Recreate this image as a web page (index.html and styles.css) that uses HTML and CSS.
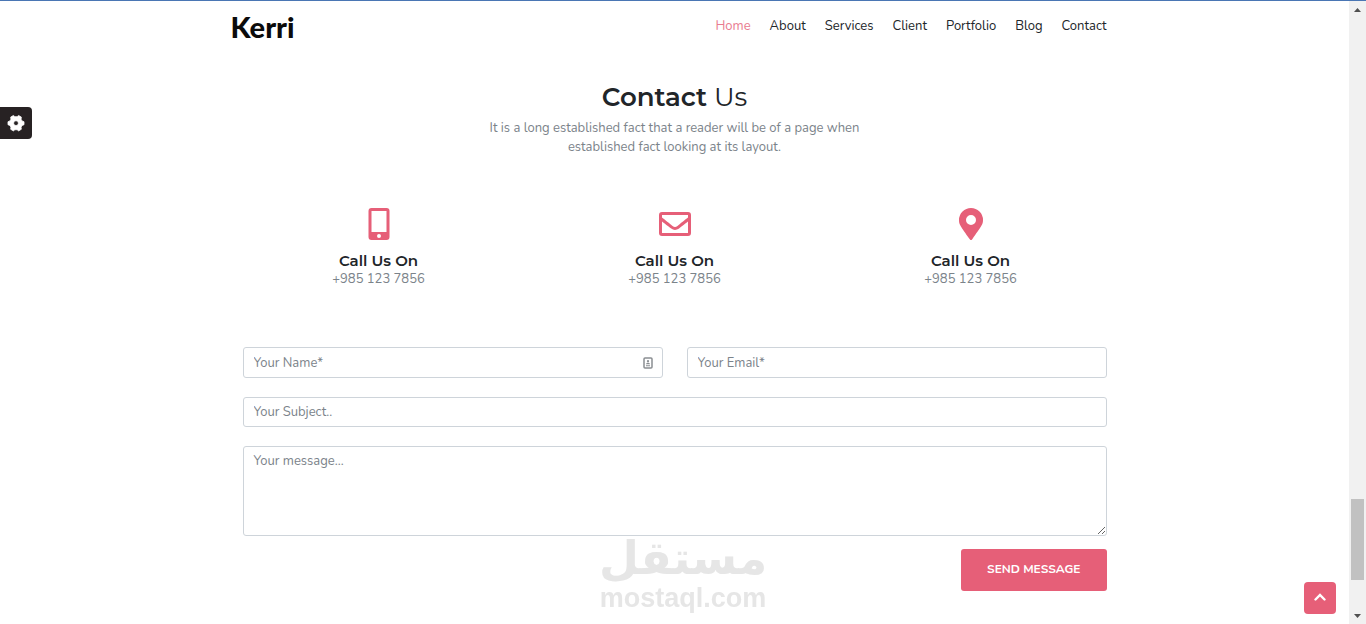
FILE: index.html
```html
<!DOCTYPE html>
<html lang="en">
<head>
<meta charset="utf-8">
<meta name="viewport" content="width=device-width, initial-scale=1">
<title>Kerri - Contact</title>
<link rel="stylesheet" href="styles.css">
</head>
<body>
<div class="page">
  <header class="container header">
    <a class="logo" href="#">Kerri</a>
    <nav class="nav">
      <a class="nav-link active" href="#">Home</a>
      <a class="nav-link" href="#">About</a>
      <a class="nav-link" href="#">Services</a>
      <a class="nav-link" href="#">Client</a>
      <a class="nav-link" href="#">Portfolio</a>
      <a class="nav-link" href="#">Blog</a>
      <a class="nav-link" href="#">Contact</a>
    </nav>
  </header>

  <main class="container contact">
    <div class="intro">
      <h1 class="title"><strong>Contact</strong> Us</h1>
      <p class="lead">It is a long established fact that a reader will be of a page when<br>established fact looking at its layout.</p>
    </div>

    <div class="cards">
      <div class="card">
        <svg class="card-icon" viewBox="0 0 32 32" aria-hidden="true"><path fill-rule="evenodd" d="M8.500 0h15a3 3 0 0 1 3 3v26a3 3 0 0 1-3 3h-15a3 3 0 0 1-3-3V3a3 3 0 0 1 3-3ZM8.500 3v21h15V3ZM16 26a2 2 0 1 0 0 4 2 2 0 0 0 0-4Z"/></svg>
        <h2 class="card-title">Call Us On</h2>
        <p class="card-text">+985 123 7856</p>
      </div>
      <div class="card">
        <svg class="card-icon" viewBox="0 0 32 32" aria-hidden="true"><path d="M29 4H3a3 3 0 0 0-3 3v18a3 3 0 0 0 3 3h26a3 3 0 0 0 3-3V7a3 3 0 0 0-3-3Zm0 3v2.550c-1.400 1.140-3.640 2.920-8.410 6.660C19.540 17.040 17.450 19.030 16 19c-1.450.030-3.540-1.960-4.590-2.790C6.640 12.470 4.400 10.690 3 9.550V7ZM3 25V13.400c1.430 1.140 3.460 2.740 6.560 5.170C10.930 19.650 13.320 22.020 16 22c2.670.020 5.030-2.320 6.440-3.430 3.100-2.430 5.130-4.030 6.560-5.170V25Z"/></svg>
        <h2 class="card-title">Call Us On</h2>
        <p class="card-text">+985 123 7856</p>
      </div>
      <div class="card">
        <svg class="card-icon" viewBox="0 0 32 32" aria-hidden="true"><path fill-rule="evenodd" d="M14.770 31.360C5.680 18.180 4 16.830 4 12a12 12 0 0 1 24 0c0 4.830-1.680 6.180-10.770 19.360a1.500 1.500 0 0 1-2.460 0ZM16 17a5 5 0 1 0 0-10 5 5 0 0 0 0 10Z"/></svg>
        <h2 class="card-title">Call Us On</h2>
        <p class="card-text">+985 123 7856</p>
      </div>
    </div>

    <form class="form">
      <div class="form-row">
        <div class="field">
          <input class="control" type="text" placeholder="Your Name*" aria-label="Your Name">
          <svg class="autofill" viewBox="0 0 10 12" aria-hidden="true"><rect x="1" y="1" width="8" height="10" rx="1" fill="none" stroke="#8a8e92" stroke-width="1.500"/><circle cx="5" cy="4.200" r="1.100"/><path d="M3 7.200c0-2 4-2 4 0ZM3 8.200h4v1H3Z"/></svg>
        </div>
        <div class="field">
          <input class="control" type="email" placeholder="Your Email*" aria-label="Your Email">
        </div>
      </div>
      <input class="control" type="text" placeholder="Your Subject.." aria-label="Your Subject">
      <textarea class="control message" placeholder="Your message..." aria-label="Your message"></textarea>
      <button class="submit" type="button">SEND MESSAGE</button>
    </form>
  </main>
</div>

<div class="scrollbar" aria-hidden="true">
  <svg class="arrow" viewBox="0 0 17 17"><path d="M5 11h7L8.500 7Z"/></svg>
  <div class="track"><div class="thumb"></div></div>
  <svg class="arrow" viewBox="0 0 17 17"><path d="M5 7h7L8.500 11Z"/></svg>
</div>

<button class="settings" type="button" aria-label="Settings">
  <svg class="gear" viewBox="0 0 24 24" aria-hidden="true"><path fill-rule="evenodd" stroke="#fff" stroke-linejoin="round" d="M8.500 2 10.500 3.500h3L15.500 2l3.600 2.100-.3 2.900 1.300 2.300 2.600 1v4l-2.600 1-1.300 2.200.3 2.900-3.600 2.100-2-1.500h-3l-2 1.500-3.600-2.100.3-2.900-1.300-2.200-2.600-1v-4l2.600-1L5.200 7l-.3-2.900ZM12 9a3.200 3.200 0 1 0 0 6.400A3.200 3.200 0 0 0 12 9Z"/></svg>
</button>
<div class="watermark">
  <span class="mark-ar" lang="ar" dir="rtl">مستقل</span>
  <span class="mark-en">mostaql.com</span>
</div>
<button class="to-top" type="button" aria-label="Back to top">
  <svg class="chevron" viewBox="0 0 12 8" aria-hidden="true"><path d="m1.500 6.500 4.500-4.500 4.500 4.500"/></svg>
</button>
</body>
</html>
```

FILE: styles.css
```css
* { box-sizing: border-box; }

body {
  margin: 0;
  min-height: 100vh;
  display: grid;
  grid-template-columns: 1fr 17px;
  border-top: 1px solid #4a76b4;
  background: #fff;
  color: #212529;
  font-family: Nunito, Lato, sans-serif;
  font-size: 13px;
  line-height: 19px;
}

h1, h2, p { margin: 0; }
button, input, textarea { font: inherit; }

.container {
  width: 100%;
  max-width: 888px;
  margin: 0 auto;
  padding: 0 12px;
}

.header {
  display: flex;
  align-items: center;
  justify-content: space-between;
  height: 51px;
  padding-left: 0;
}

.logo {
  color: #0b0b0b;
  font-family: Lato, sans-serif;
  font-size: 29px;
  font-weight: 900;
  line-height: 32px;
  text-decoration: none;
}

.nav { display: flex; gap: 19px; }
.nav-link { color: #212529; text-decoration: none; }
.nav-link.active { color: #e97b8f; }

.contact { padding-top: 29px; }
.intro { text-align: center; }

.title {
  margin-bottom: 5px;
  font-family: Montserrat, Inter, sans-serif;
  font-size: 26px;
  font-weight: 400;
  line-height: 33px;
}
.title strong { font-weight: 600; }
.lead { color: #7b838a; }

.cards {
  display: grid;
  grid-template-columns: repeat(3, 1fr);
  gap: 24px;
  margin: 51px 0 59px;
}
.card {
  display: flex;
  flex-direction: column;
  align-items: center;
}
.card-icon { width: 32px; height: 32px; fill: #e65f78; }
.card-title {
  margin-top: 12px;
  font-family: Montserrat, Inter, sans-serif;
  font-size: 15px;
  font-weight: 600;
  line-height: 18px;
}
.card-text { color: #7b838a; font-size: 13px; line-height: 18px; }

.form { display: flex; flex-direction: column; gap: 19px; }
.form-row { display: grid; grid-template-columns: 1fr 1fr; gap: 24px; }
.field { position: relative; display: flex; }

.control {
  width: 100%;
  height: 30px;
  padding: 5px 10px;
  border: 1px solid #ced4da;
  border-radius: 3px;
  background: #fff;
  color: #495057;
}
.field .control { height: 31px; }
.control::placeholder { color: #7b838a; opacity: 1; }
.message { display: block; height: 90px; resize: vertical; }

.autofill {
  position: absolute;
  top: 10px;
  right: 10px;
  width: 10px;
  height: 12px;
  fill: #8a8e92;
}

.submit {
  align-self: flex-end;
  margin-top: -6px;
  padding: 11px 26px 12px;
  border: 0;
  border-radius: 3px;
  background: #e65f78;
  color: #fff;
  font-size: 12px;
  font-weight: 700;
}

.scrollbar {
  display: flex;
  flex-direction: column;
  background: #f1f1f1;
}
.arrow { width: 17px; height: 17px; fill: #505050; }
.track {
  flex: 1;
  display: flex;
  flex-direction: column;
  justify-content: flex-end;
  padding: 0 2px 27px;
}
.thumb { height: 81px; background: #c1c1c1; }

.settings, .to-top {
  position: fixed;
  display: grid;
  place-items: center;
  width: 32px;
  height: 32px;
  padding: 0;
  border: 0;
}
.settings {
  top: 107px;
  left: 0;
  border-radius: 0 4px 4px 0;
  background: #272223;
}
.gear { width: 18px; height: 18px; fill: #fff; }
.to-top {
  right: 30px;
  bottom: 10px;
  padding-bottom: 3px;
  border-radius: 4px;
  background: #e65f78;
}
.chevron {
  width: 12px;
  height: 8px;
  fill: none;
  stroke: #fff;
  stroke-width: 2.4;
  stroke-linecap: round;
}

.watermark {
  position: fixed;
  bottom: 10px;
  left: 50%;
  display: flex;
  flex-direction: column;
  align-items: center;
  width: 164px;
  margin-left: -82px;
  color: #e6e6e6;
  font-weight: 700;
  pointer-events: none;
}
.mark-ar { font-family: "DejaVu Sans", sans-serif; font-size: 46px; line-height: 50px; }
.mark-en { font-family: "Liberation Sans", sans-serif; font-size: 27px; line-height: 31px; }
```
